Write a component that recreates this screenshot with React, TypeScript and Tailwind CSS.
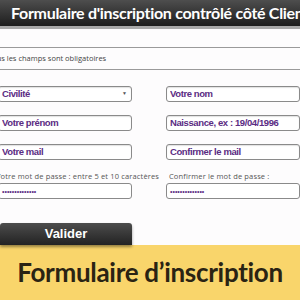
import React from 'react';

const Field: React.FC<{ text: string; select?: boolean }> = ({ text, select }) => (
  <div className="h-[16px] border border-[#8a8a8a] rounded-[3px] bg-white flex items-center px-[3px] shadow-[inset_0_1px_1px_rgba(0,0,0,0.12)]">
    <span className="flex-1 text-[9.5px] tracking-[-0.4px] font-bold text-[#5b2c83] whitespace-nowrap overflow-hidden leading-none">
      {text}
    </span>
    {select && <span className="text-[5px] text-[#555] mr-[1px]">▼</span>}
  </div>
);

const Dots = () => (
  <div className="h-[16px] border border-[#8a8a8a] rounded-[3px] bg-white flex items-center px-[3px]">
    <span className="text-[7px] text-[#5b2c83] leading-none">••••••••••••••</span>
  </div>
);

const label = { fontFamily: '"Open Sans", sans-serif' };

export default function App() {
  return (
    <div className="w-[300px] h-[300px] overflow-hidden bg-[#fdfcfd] flex flex-col" style={{ fontFamily: '"Liberation Sans", Arial, sans-serif' }}>
      <div className="h-[29px] shrink-0 bg-gradient-to-b from-[#4e4e4e] to-[#1e1e1e] flex items-center pl-[11px] border-b-[3px] border-[#a9a9a9]">
        <span className="text-white text-[16px] tracking-[-0.3px] font-bold whitespace-nowrap" style={{ fontFamily: 'Lato, sans-serif' }}>
          Formulaire d'inscription contrôlé côté Client
        </span>
      </div>

      <div className="mt-[18px] border-t border-[#9a9a9a]" />
      <div className="h-[21px] flex items-center -ml-[12px] text-[7.5px] text-[#444] whitespace-nowrap" style={label}>
        Tous les champs sont obligatoires
      </div>
      <div className="border-t border-[#9a9a9a]" />

      <div className="grid grid-cols-[134px_134px] gap-x-[34px] gap-y-[13px] -ml-[2px] mt-[16px]">
        <Field text="Civilité" select />
        <Field text="Votre nom" />
        <Field text="Votre prénom" />
        <Field text="Naissance, ex : 19/04/1996" />
        <Field text="Votre mail" />
        <Field text="Confirmer le mail" />
      </div>

      <div className="grid grid-cols-[134px_134px] gap-x-[34px] -ml-[2px] mt-[11px]">
        <div>
          <div className="text-[7.5px] tracking-[0.15px] text-[#555] -ml-[2px] mb-[2px] whitespace-nowrap leading-[10px]" style={label}>
            Votre mot de passe : entre 5 et 10 caractères
          </div>
          <Dots />
        </div>
        <div>
          <div className="text-[7.5px] tracking-[0.15px] text-[#555] ml-[3px] mb-[2px] whitespace-nowrap leading-[10px]" style={label}>
            Confirmer le mot de passe :
          </div>
          <Dots />
        </div>
      </div>

      <div className="mt-[24px] w-[132px] h-[22px] rounded-t-[3px] bg-gradient-to-b from-[#4d4d4d] to-[#232323] flex items-center justify-center shadow-[0_2px_3px_rgba(0,0,0,0.4)] relative z-10">
        <span className="text-white text-[13px] font-bold">Valider</span>
      </div>

      <div className="flex-1 bg-[#f9d56b] flex items-center justify-center">
        <span className="text-[#2a2313] text-[26px] tracking-[-0.3px] font-bold whitespace-nowrap" style={{ fontFamily: 'Lato, sans-serif' }}>
          Formulaire d’inscription
        </span>
      </div>
    </div>
  );
}
